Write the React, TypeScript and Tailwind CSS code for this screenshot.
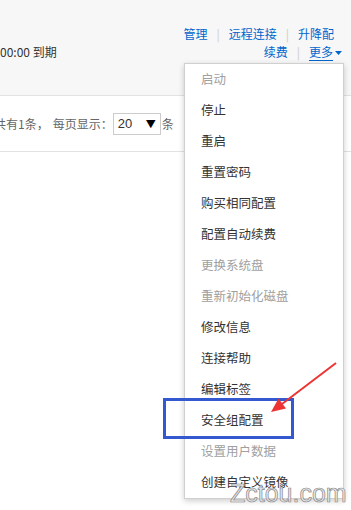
import React from "react";

type TItem = {
  label: string;
  disabled?: boolean;
};

const menuItems: TItem[] = [
  { label: "启动", disabled: true },
  { label: "停止" },
  { label: "重启" },
  { label: "重置密码" },
  { label: "购买相同配置" },
  { label: "配置自动续费" },
  { label: "更换系统盘", disabled: true },
  { label: "重新初始化磁盘", disabled: true },
  { label: "修改信息" },
  { label: "连接帮助" },
  { label: "编辑标签" },
  { label: "安全组配置" },
  { label: "设置用户数据", disabled: true },
  { label: "创建自定义镜像" },
];

const font = "font-['Microsoft_YaHei','Noto_Sans_CJK_SC',sans-serif]";

const Sep = () => <span className="mx-[9px] text-[#cccccc]">|</span>;

const App = () => {
  return (
    <div
      className={`relative w-[351px] h-[510px] overflow-hidden bg-white text-[12px] ${font}`}
    >
      {/* header row */}
      <div className="flex h-[96px] items-start justify-between bg-[#f7f7f7] border-b border-[#e2e2e2]">
        <div className="mt-[43px] leading-[18px] text-[#333333]">
          00:00 到期
        </div>
        <div className="mt-[25px] flex flex-col items-end leading-[18px] text-[#0066cc]">
          <div className="mr-[17px] flex">
            <span>管理</span>
            <Sep />
            <span>远程连接</span>
            <Sep />
            <span>升降配</span>
          </div>
          <div className="mr-[8px] flex">
            <span>续费</span>
            <Sep />
            <span className="underline underline-offset-[3px]">更多</span>
            <svg width="9" height="18" viewBox="0 0 9 18" className="ml-[1px]">
              <path d="M1 8 L8 8 L4.5 12 Z" fill="#0066cc" />
            </svg>
          </div>
        </div>
      </div>

      {/* pager row */}
      <div className="flex h-[56px] items-center border-b border-[#e2e2e2] text-[#666666]">
        <span className="-ml-[6px]">共有1条，</span>
        <span className="ml-[4px]">每页显示：</span>
        <div className="flex h-[22px] w-[48px] items-center justify-between border border-[#cccccc] px-[4px] text-[#333333]">
          <span className="font-['Liberation_Sans',sans-serif] text-[13px]">20</span>
          <span className="text-[10px] text-black">▼</span>
        </div>
        <span className="ml-[1px]">条</span>
      </div>

      {/* dropdown menu */}
      <div className="absolute left-[184px] top-[63px] w-[160px] border border-[#d0d0d0] bg-white shadow-[0_2px_6px_rgba(0,0,0,0.2)]">
        {menuItems.map((item) => (
          <div
            key={item.label}
            className={`flex h-[31px] items-center pl-[16px] text-[12.5px] ${
              item.disabled ? "text-[#a0a0a0]" : "text-[#333333]"
            }`}
          >
            {item.label}
          </div>
        ))}
      </div>

      {/* highlight box */}
      <div className="absolute left-[163px] top-[398px] h-[41px] w-[131px] border-[3px] border-[#3358d0]" />

      {/* red arrow */}
      <svg
        className="absolute left-0 top-0"
        width="351"
        height="510"
        viewBox="0 0 351 510"
      >
        <line x1="336" y1="363" x2="282" y2="404" stroke="#ec3434" strokeWidth="2" />
        <polygon points="271,412 286,408.5 278.5,398.5" fill="#ec3434" />
      </svg>

      {/* watermark */}
      <div
        className="absolute left-[230px] top-[478px] font-['Liberation_Sans',sans-serif] text-[25px] leading-[30px] text-[#e8e8e8]"
        style={{ WebkitTextStroke: "0.7px #8a8a8a" }}
      >
        Zctou.com
      </div>
    </div>
  );
};

export default App;
